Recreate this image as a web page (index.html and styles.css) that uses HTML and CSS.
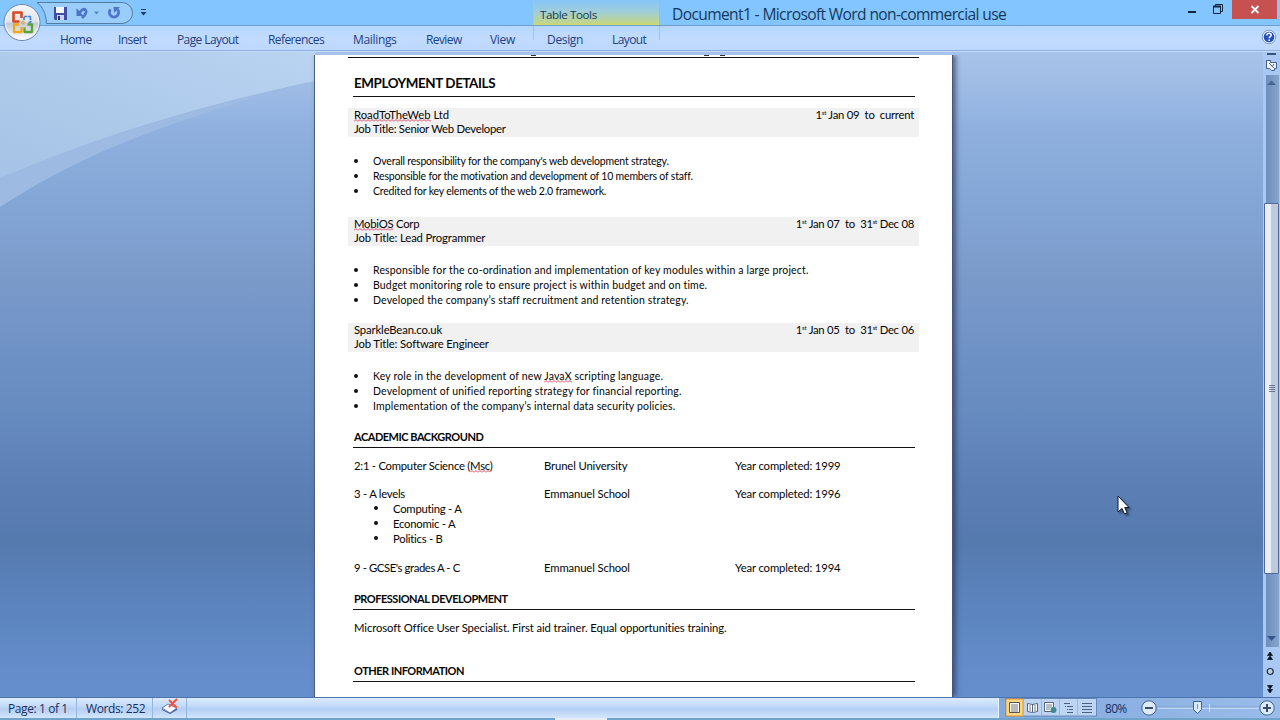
FILE: index.html
```
<!DOCTYPE html>
<html lang="en">
<head>
<meta charset="utf-8">
<title>Document1 - Microsoft Word</title>
<link rel="stylesheet" href="styles.css">
</head>
<body>
<div class="app">
  <header class="titlebar">
    <div class="quick">
      <svg class="quick-art" width="160" height="26" viewBox="0 0 160 26">
        <path d="M37 2.500H122a10.500 10.500 0 0 1 0 21H46.500C46 14 43 7 37 2.500Z" fill="#9bcdfa" stroke="#527d9f"/>
        <path d="M54 7h13v13H55l-1-1Z" fill="#3f4da5"/><path d="M56 7h8v6h-8z" fill="#f4f7ff"/><path d="M57 15h7v5h-7z" fill="#c9d2ee"/><path d="M58 16h2v4h-2z" fill="#27336f"/>
        <path d="M79 13.500q4-6 6.500-3.500t-3.500 8" fill="none" stroke="#4c74c8" stroke-width="2.800"/><path d="M76.500 8v8h7Z" fill="#4c74c8"/>
        <path d="M94 11.500h5l-2.500 3Z" fill="#5187b8"/>
        <path d="M110.500 9.500a4.600 4.600 0 1 0 7 0" fill="none" stroke="#4c74c8" stroke-width="2.800"/><path d="M113.500 7h6.500l-6 6Z" fill="#4c74c8"/>
        <path d="M141 9.500h5" stroke="#1d3d61"/><path d="M140.500 12h6l-3 3.500Z" fill="#1d3d61"/>
      </svg>
    </div>
    <div class="context">Table Tools</div>
    <h1 class="title">Document1 - Microsoft Word non-commercial use</h1>
    <div class="window-buttons">
      <svg width="35" height="20" viewBox="0 0 35 20"><path d="M3 12h8" stroke="#12253a" stroke-width="2"/><path d="M28.500 6.500h7v7h-7zM30.500 6V4.500h7v7H36" fill="none" stroke="#12253a"/><path d="M28 6.500h8" stroke="#12253a" stroke-width="2"/></svg>
      <div class="close"><svg width="45" height="19" viewBox="0 0 45 19"><path d="M19.500 6l7 7M26.500 6l-7 7" stroke="#fff" stroke-width="1.800"/></svg></div>
    </div>
  </header>
  <nav class="tabs">
    <span>Home</span><span>Insert</span><span>Page Layout</span><span>References</span><span class="loose">Mailings</span><span>Review</span><span class="loose">View</span><span class="loose">Design</span><span>Layout</span>
    <svg class="help" width="16" height="16" viewBox="0 0 16 16"><circle cx="8" cy="8" r="6.800" fill="#e9f3ff" stroke="#7d9bc9"/><circle cx="8" cy="8" r="5.300" fill="#2450bd"/><path d="M5.900 6.500c.1-3 4.500-2.800 4.300-.2-.1 1.300-2 1.400-2 3" fill="none" stroke="#fff" stroke-width="1.500"/><path d="M7.400 10.500H9V12H7.400z" fill="#fff"/></svg>
  </nav>
  <svg class="orb" width="40" height="40" viewBox="0 0 40 40">
    <defs><linearGradient id="orbFill" x1="0" y1="0" x2="0" y2="1"><stop offset="0" stop-color="#f7f8fb"/><stop offset=".48" stop-color="#dfe3ec"/><stop offset=".52" stop-color="#c3cbd9"/><stop offset="1" stop-color="#fff"/></linearGradient></defs>
    <circle cx="20" cy="20.500" r="18" fill="url(#orbFill)" stroke="#6585ac"/><circle cx="20" cy="20.500" r="16.800" fill="none" stroke="#f9fbff" opacity=".8"/>
    <g fill="none" stroke-linejoin="round">
      <path d="M19.500 16v-5.500h-8v9h6" stroke="#d8491c" stroke-width="2.600"/>
      <path d="M22 18v-3.500h6.500v6H26" stroke="#3f83cf" stroke-width="1.700" stroke-dasharray="3 .6"/>
      <path d="M17 22.500h-5v7.500h7.500v-5" stroke="#f0a818" stroke-width="2.300"/>
      <path d="M22.500 25.500V30H30v-7.500h-4.500" stroke="#5ba337" stroke-width="2.300"/>
      <path d="M19 20.500h4M21 18.500v4" stroke="#e29b4a" stroke-width="1.400" stroke-dasharray="1.500 1"/>
    </g>
  </svg>

  <main class="workspace">
    <svg class="swoosh" width="330" height="160" viewBox="0 0 330 160">
      <defs><linearGradient id="sky" x1="0" y1="1" x2="1" y2="0"><stop offset="0" stop-color="#a5c3e6"/><stop offset="1" stop-color="#b9d3f1"/></linearGradient></defs>
      <path d="M0 155C60 117 130 78 315 29V0H0Z" fill="#9cbae2"/>
      <path d="M0 126C80 92 180 57 315 29V0H0Z" fill="url(#sky)"/>
    </svg>
    <article class="page">
      <div class="cut-line"><i></i><i></i><i></i></div>
      <h2 class="head big">EMPLOYMENT DETAILS</h2>

      <section class="job">
        <div class="band"><div><p class="plain"><span class="wavy">RoadToTheWeb</span> Ltd</p><p class="narrow">Job Title: Senior Web Developer</p></div><p class="dates">1<sup>st</sup> Jan 09 &nbsp;to &nbsp;current</p></div>
        <ul class="duties snug"><li>Overall responsibility for the company's web development strategy.</li><li>Responsible for the motivation and development of 10 members of staff.</li><li>Credited for key elements of the web 2.0 framework.</li></ul>
      </section>
      <section class="job second">
        <div class="band"><div><p class="narrow"><span class="wavy">MobiOS</span> Corp</p><p>Job Title: Lead Programmer</p></div><p class="dates">1<sup>st</sup> Jan 07 &nbsp;to &nbsp;31<sup>st</sup> Dec 08</p></div>
        <ul class="duties"><li>Responsible for the co-ordination and implementation of key modules within a large project.</li><li>Budget monitoring role to ensure project is within budget and on time.</li><li>Developed the company’s staff recruitment and retention strategy.</li></ul>
      </section>
      <section class="job third">
        <div class="band"><div><p>SparkleBean.co.uk</p><p>Job Title: Software Engineer</p></div><p class="dates">1<sup>st</sup> Jan 05 &nbsp;to &nbsp;31<sup>st</sup> Dec 06</p></div>
        <ul class="duties"><li>Key role in the development of new <span class="wavy">JavaX</span> scripting language.</li><li>Development of unified reporting strategy for financial reporting.</li><li>Implementation of the company’s internal data security policies.</li></ul>
      </section>

      <h2 class="head">ACADEMIC BACKGROUND</h2>
      <div class="study first"><span class="narrow">2:1 - Computer Science (<span class="wavy">Msc</span>)</span><span>Brunel University</span><span>Year completed: 1999</span></div>
      <div class="study"><span class="narrow">3 - A levels</span><span>Emmanuel School</span><span>Year completed: 1996</span></div>
      <ul class="grades narrow"><li>Computing - A</li><li>Economic - A</li><li>Politics - B</li></ul>
      <div class="study last"><span class="narrower">9 - GCSE's grades A - C</span><span>Emmanuel School</span><span>Year completed: 1994</span></div>

      <h2 class="head prof">PROFESSIONAL DEVELOPMENT</h2>
      <p class="skills">Microsoft Office User Specialist. First aid trainer. Equal opportunities training.</p>
      <h2 class="head other">OTHER INFORMATION</h2>
    </article>

    <aside class="scroll">
      <svg class="ruler" width="17" height="23" viewBox="0 0 17 23"><path d="M2 2h9" stroke="#34557f" stroke-width="2"/><path d="M1.500 8.500h4v2h6v6h-2v2h-3l-2-2h-3z" fill="#eef4ff" stroke="#455f86"/><path d="M4 11l5 5M9 12l-2 3" stroke="#455f86"/></svg>
      <div class="track"><svg width="15" height="14" viewBox="0 0 15 14"><path d="M1 10h9L5.500 5.500Z" fill="#46658f"/></svg></div>
      <div class="thumb"><i></i><i></i><i></i><i></i></div>
      <div class="track low"><svg width="15" height="14" viewBox="0 0 15 14"><path d="M1 4h9L5.500 9Z" fill="#34588c"/></svg></div>
      <svg width="17" height="50" viewBox="0 0 17 50"><path d="M4.500 8.500h5L7 5zM4.500 12.500h5L7 9zM4.500 38.500h5L7 42zM4.500 42.500h5L7 46z" fill="#07101e" stroke="#07101e" stroke-width=".7"/><circle cx="7.200" cy="24.500" r="3" fill="#bfcfdd" stroke="#1c2b40" stroke-width="1.200"/></svg>
    </aside>
    <svg class="cursor" width="18" height="24" viewBox="0 0 18 24"><path d="M2 1v16l4-3.500 2.500 5.500 2.600-1.200L8.700 12.500H13Z" fill="#fff" stroke="#111a30" stroke-linejoin="round"/></svg>
  </main>

  <footer class="status">
    <span class="cell pages">Page: 1 of 1</span><span class="cell words">Words: 252</span>
    <span class="cell proof"><svg width="18" height="17" viewBox="0 0 18 17"><path d="M1 10l6-4 9 4-7 5z" fill="#f6f8ff" stroke="#6d7eae"/><path d="M1 11l8 4 7-5v2l-7 4-8-4z" fill="#4b62a5"/><path d="M8 2l8 8M16 1L8 9" stroke="#f1533d" stroke-width="2"/></svg></span>
    <div class="views">
      <svg width="92" height="19" viewBox="0 0 92 19">
        <rect x=".5" y=".5" width="91" height="17.500" fill="#bdd5f3" stroke="#6287ba"/><rect x="1" y="1" width="17" height="17" fill="#ffd783" stroke="#d79a3b"/>
        <path d="M18.500 1v17M36.500 1v17M54.500 1v17M72.500 1v17" stroke="#9ab7df"/>
        <path d="M4.500 4.500h10v10h-10z" fill="#fff" stroke="#555"/><path d="M6 7h7M6 9h7M6 11h7M6 13h7" stroke="#777"/>
        <path d="M22.500 5.500l5 1 5-1v8l-5 1-5-1zM27.500 6v8" fill="#fff" stroke="#556579"/><path d="M24 8h2M24 10h2M24 12h2M29 8h2M29 10h2M29 12h2" stroke="#6e7d90"/>
        <path d="M39.500 4.500h9v9h-9z" fill="#fff" stroke="#556579"/><path d="M41 7h6M41 9h6M41 11h4" stroke="#6e7d90"/><circle cx="48.500" cy="12" r="3" fill="#42898b"/>
        <path d="M59 5.500h6M62 8.500h6M64 11.500h4M62 14.500h6M60 8.500h1M62 11.500h1" stroke="#4f6178"/>
        <path d="M77 5.500h10M77 8.500h10M77 11.500h10M77 14.500h10" stroke="#4f6178"/>
      </svg>
    </div>
    <span class="percent">80%</span>
    <svg class="zoom" width="140" height="20" viewBox="0 0 140 20">
      <path d="M18 10h101" stroke="#e6f1ff"/><path d="M18 9h101" stroke="#6389c0" opacity=".6"/><path d="M69.500 6v8" stroke="#d2e5ff"/>
      <g fill="#dbe9fb" stroke="#41618f"><circle cx="9" cy="10" r="7.200"/><circle cx="127" cy="10" r="7.200"/></g><path d="M5 10h8M123 10h8M127 6v8" stroke="#384d6c" stroke-width="2"/>
      <path d="M53.500 3.500h8v8l-4 4-4-4z" fill="#d9e9ff" stroke="#3e6398"/><path d="M57.500 6v5" stroke="#7398cb"/>
    </svg>
  </footer>
  <div class="edge"><i></i></div>
</div>
</body>
</html>
```
FILE: styles.css
```
* { box-sizing: border-box; }
body { margin: 0; overflow: hidden; font-family: "Open Sans", "Noto Sans", sans-serif; }
h1, h2, p, ul { margin: 0; padding: 0; font-weight: normal; }
ul { list-style: none; }
svg { display: block; flex: none; }

.app { position: relative; width: 1280px; height: 720px; display: flex; flex-direction: column; overflow: hidden; }

.titlebar { height: 26px; flex: none; display: flex; background: #82c5ff; border-bottom: 1px solid #719fd0; }
.quick { width: 533px; flex: none; }
.orb { position: absolute; left: 2px; top: 2px; z-index: 2; }
.context { width: 127px; height: 25px; flex: none; padding-left: 6px; font-size: 11.6px; line-height: 29px; letter-spacing: -0.4px; color: #153a5c; background: linear-gradient(#86c6fa, #9fcddb 45%, #c0d58e 90%, #d1da6a); border-left: 1px solid #9ac9df; border-right: 1px solid #91bed8; }
.title { width: 525px; padding-left: 12px; font-size: 15.6px; line-height: 28px; letter-spacing: -0.64px; color: #16395b; white-space: nowrap; }
.window-buttons { display: flex; }
.window-buttons > svg { overflow: visible; }
.close { width: 45px; height: 19px; margin-left: 12px; background: #c75050; }

.tabs { position: relative; height: 25px; flex: none; padding-left: 60px; display: grid; grid-template-columns: 58px 59px 91px 85px 73px 64px 57px 65px 1fr; color: #1d4283; font-size: 12px; line-height: 27px; letter-spacing: -0.6px; background: linear-gradient(#b5d7ff, #c2dbff 50%, #bdd7fd); border-bottom: 1px solid #8fb0de; white-space: nowrap; }
.tabs .loose { letter-spacing: -0.33px; }
.tabs span:nth-child(8) { border-left: 1px solid #a1c3eb; margin-left: -14px; padding-left: 13px; height: 14px; }
.tabs span:nth-child(9) { border-right: 1px solid #a1c3eb; width: 48px; height: 14px; }
.help { position: absolute; left: 1261px; top: 3px; }

.workspace { position: relative; height: 646px; flex: none; display: flex; padding-left: 314px; border-top: 1px solid #c4daf8; background: linear-gradient(#a8c3ea, #9fbce5 5%, #8fb0df 12%, #84a6d6 23%, #7a9aca 35%, #6e91c5 47%, #668bbf 56%, #5c80b6 67%, #557aae 76%, #5a81ba 83%, #5e88c2 90%, #658ccb 96%, #648fcc); }
.swoosh { position: absolute; left: 0; top: 0; }
.page { position: relative; width: 639px; height: 642px; margin-top: 3px; padding: 0 33px; background: #fff; border-left: 1px solid #4b5f7c; border-right: 1px solid #47577b; box-shadow: 3px 0 5px rgba(39, 52, 85, 0.65); font-family: Lato, "Open Sans", sans-serif; font-size: 11.3px; line-height: 14px; color: #050505; white-space: nowrap; letter-spacing: -0.14px; clip-path: inset(0 -12px 0 -4px); }

.cut-line { display: flex; height: 3px; border-bottom: 1px solid #111; padding-left: 183px; }
.cut-line i { width: 5px; height: 1px; background: #333; }
.cut-line i:nth-child(2) { margin-left: 168px; }
.cut-line i:nth-child(3) { margin-left: 11px; }

.head { margin: 9px 4px 0 5px; height: 18px; padding-left: 1px; border-bottom: 1px solid #111; font-size: 11px; line-height: 14px; font-weight: 700; letter-spacing: -0.48px; }
.head.big { height: 23px; margin-top: 16px; font-size: 13.4px; line-height: 19px; letter-spacing: -0.4px; }

.narrow { letter-spacing: -0.25px; }
.narrower { letter-spacing: -0.4px; }
.plain { letter-spacing: -0.02px; }

.band { height: 29px; display: flex; justify-content: space-between; padding: 0 5px 0 6px; background: #f1f1f2; }
.big + .job { margin-top: 11px; }
.job.second { margin-top: 19px; }
.job.third { margin-top: 16px; }
.dates { letter-spacing: -0.25px; }
sup { font-size: 6px; line-height: 0; vertical-align: 4px; }
.wavy { padding-bottom: 1px; background: url("data:image/svg+xml,%3Csvg xmlns='http://www.w3.org/2000/svg' width='4' height='3'%3E%3Cpath d='M0 2.500L2 .5L4 2.500' fill='none' stroke='%23d52b4e' stroke-width='.9'/%3E%3C/svg%3E") repeat-x left bottom; }
.duties { height: 61px; padding: 17px 0 0 25px; font-size: 10.5px; line-height: 15px; letter-spacing: 0.16px; }
.duties.snug { letter-spacing: -0.19px; }
.duties li, .grades li { position: relative; }
.duties li::before, .grades li::before { content: ""; position: absolute; left: -19px; top: 5px; width: 4px; height: 4px; border-radius: 50%; background: #111; }

.job.third + .head { margin-top: 17px; }
.study { display: grid; grid-template-columns: 190px 191px 1fr; padding-left: 6px; margin-top: 14px; height: 14px; }
.study.first { margin-top: 11px; }
.grades { padding: 0 0 0 45px; line-height: 15px; height: 46px; }
.head.prof { margin-top: 17px; }
.skills { margin: 11px 0 0 6px; letter-spacing: -0.12px; }
.head.other { margin-top: 29px; }

.scroll { width: 17px; margin-left: 310px; background: #a9c8f3; }
.ruler { margin-left: 2px; }
.track { width: 13px; height: 128px; margin-left: 3px; background: linear-gradient(90deg, #6d8fbd, #86a5cd); }
.track.low { height: 73px; padding-top: 58px; }
.thumb { width: 15px; height: 371px; margin-left: 1px; padding: 181px 3px 0 4px; display: flex; flex-direction: column; gap: 1px; border: 1px solid #53699e; border-radius: 1px; background: linear-gradient(90deg, #e9eef8 0 45%, #bccbdd 50%, #becbdc); }
.thumb i { height: 1px; background: #647890; }
.cursor { position: absolute; left: 1116px; top: 443px; filter: drop-shadow(2px 2px 1px rgba(20, 30, 60, 0.55)); }

.status { height: 21px; flex: none; display: flex; align-items: stretch; color: #162f60; font-size: 12px; line-height: 22px; letter-spacing: -0.4px; background: linear-gradient(90deg, transparent 998px, #83a8dc 999px, #99bcea), linear-gradient(#dceaff, #c7dcf9 35%, #b4cff3 55%, #d3e5fc); border-top: 1px solid #4d74ab; white-space: nowrap; }
.cell { border-right: 1px solid #96b5df; padding-left: 8px; }
.pages { width: 77px; }
.words { width: 76px; padding-left: 9px; }
.proof { width: 34px; }
.views { width: 100px; margin-left: auto; padding-left: 6px; border-left: 1px solid #eaf4ff; }
.percent { width: 42px; padding-left: 7px; letter-spacing: -0.7px; }
.zoom { width: 140px; }
.edge { height: 2px; background: #6fa3c9; padding-left: 555px; }
.edge i { display: block; width: 52px; height: 2px; background: #e6edf5; }
```
